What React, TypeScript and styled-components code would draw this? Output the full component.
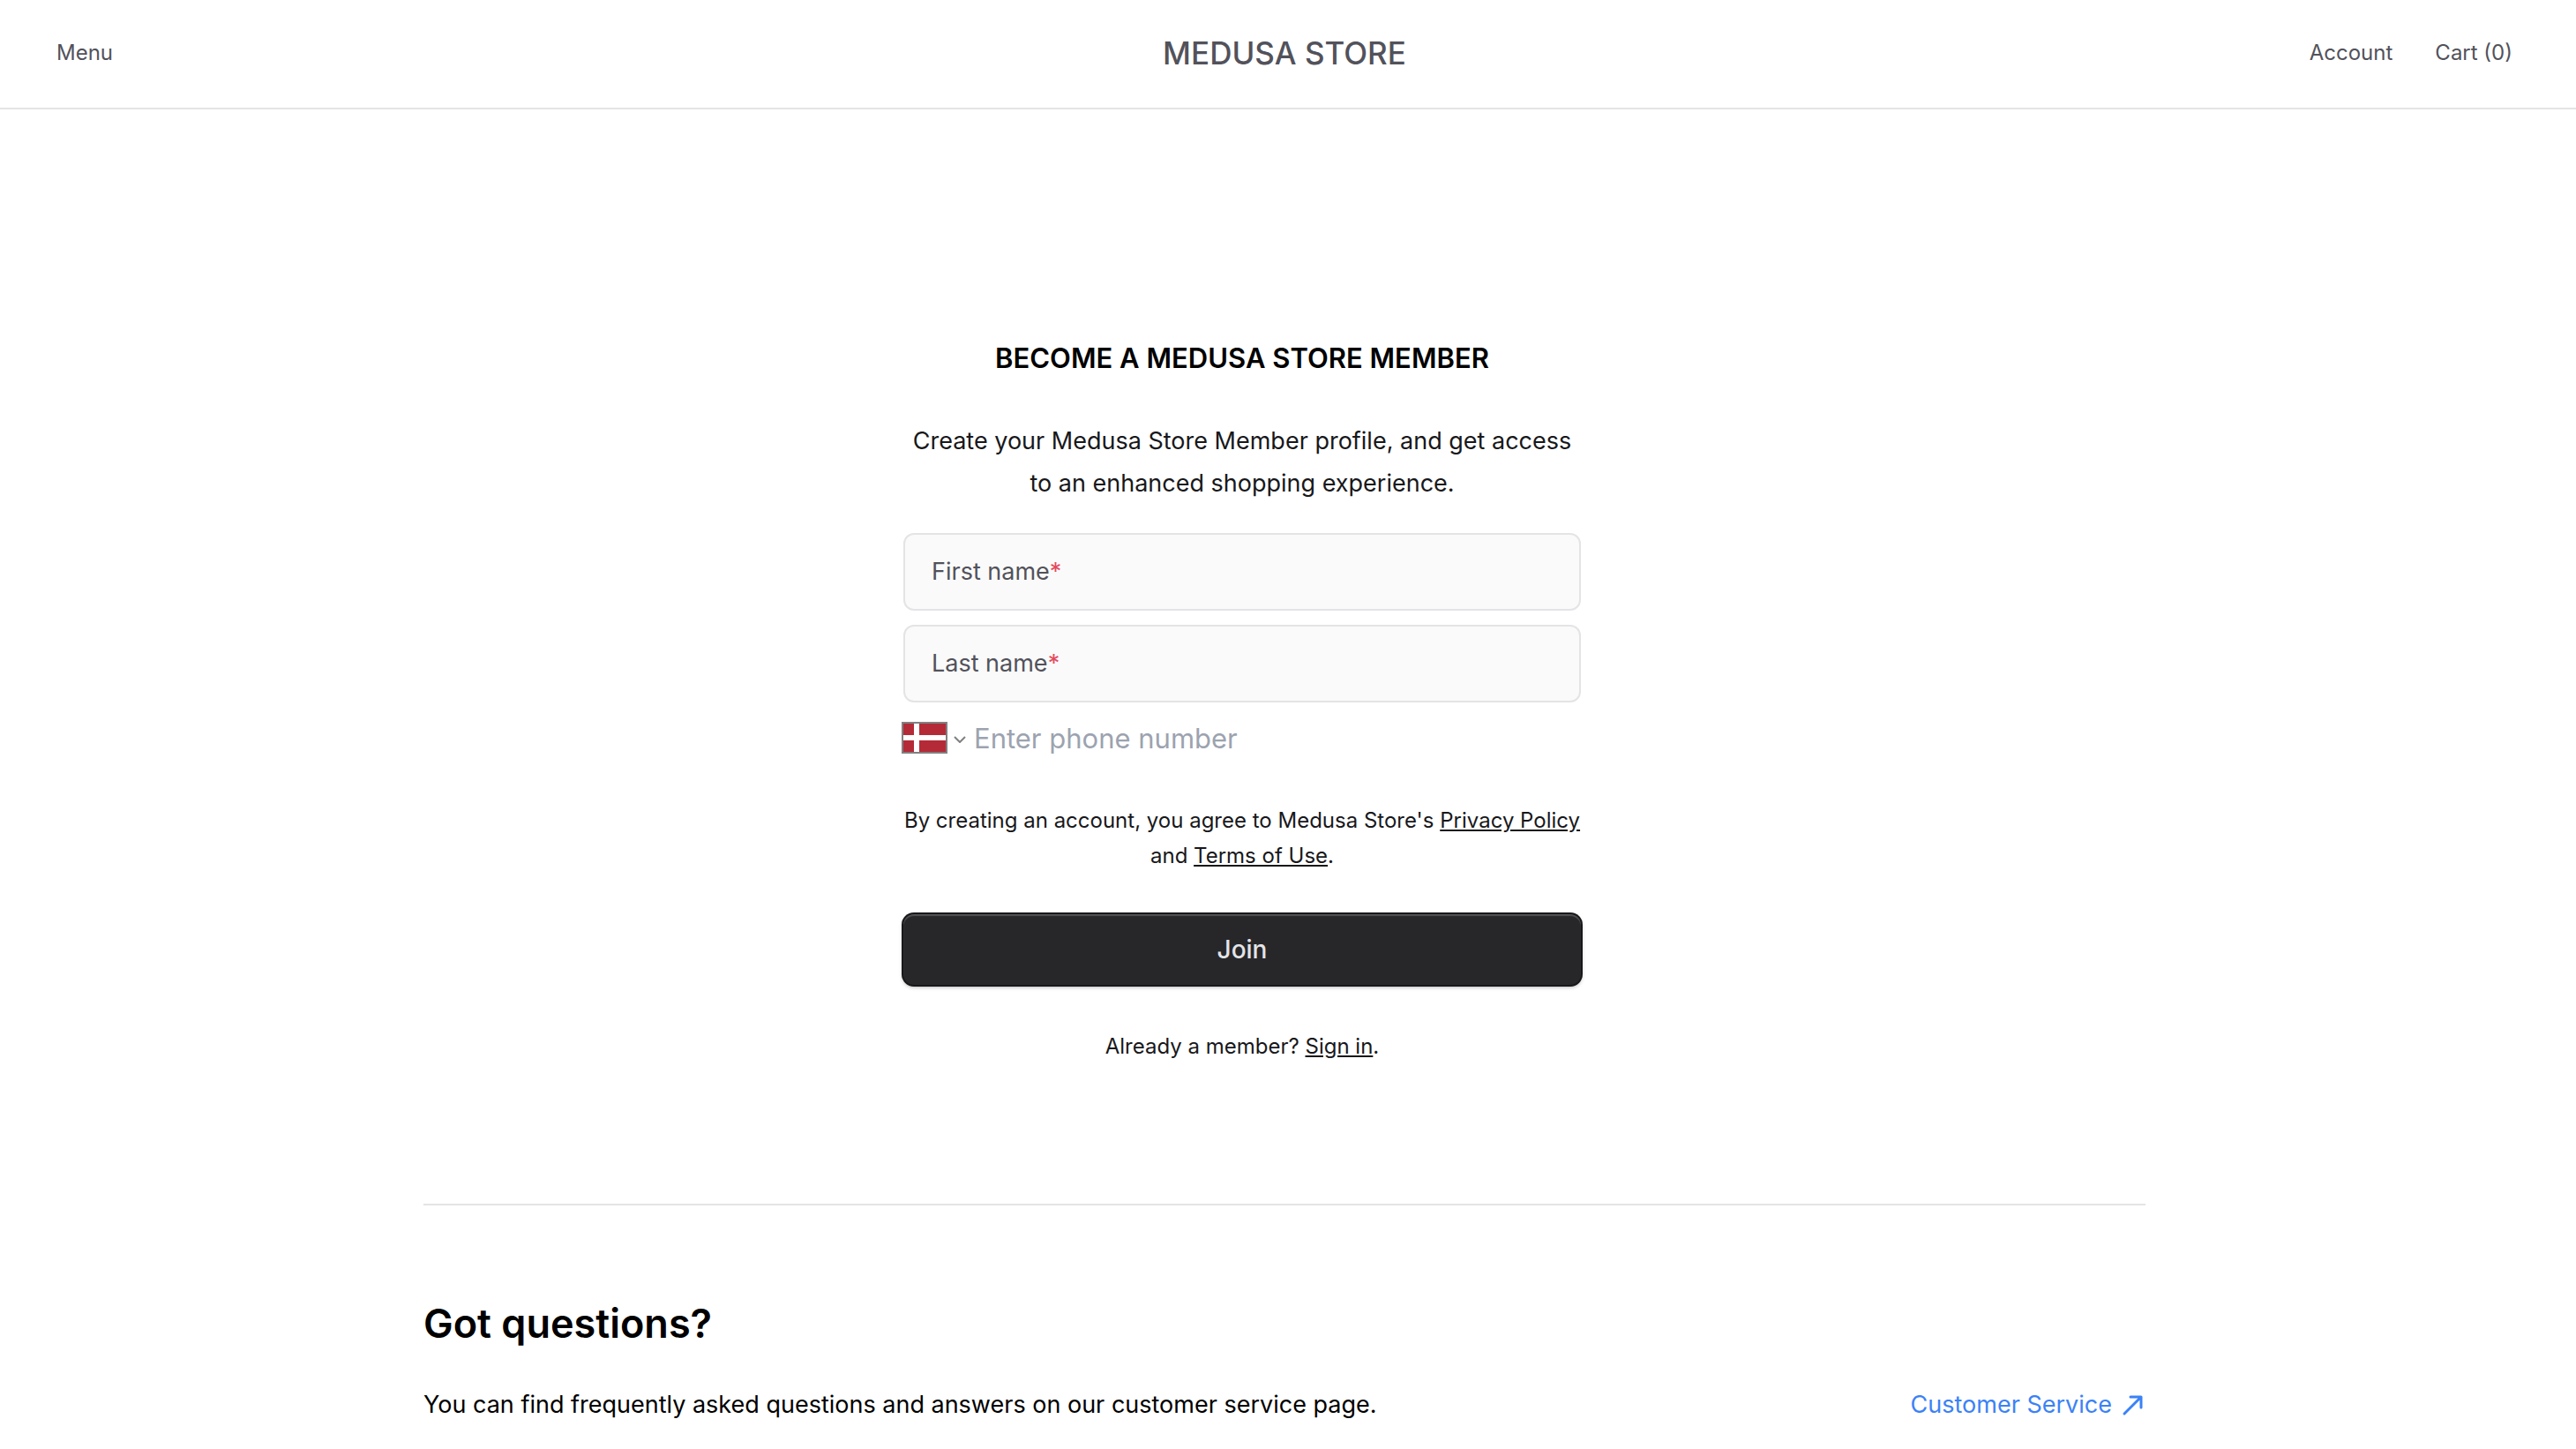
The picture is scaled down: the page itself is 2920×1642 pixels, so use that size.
import React from "react";
import styled, { createGlobalStyle } from "styled-components";

const GlobalStyle = createGlobalStyle`
  *, *::before, *::after { box-sizing: border-box; }
  body {
    margin: 0;
    background: #ffffff;
    color: #18181b;
    font-family: Inter, "Liberation Sans", sans-serif;
    font-size: 27px;
    line-height: 48px;
  }
  h1, h2, p { margin: 0; }
  button, input, select { font-family: inherit; }
`;

const Header = styled.header`
  border-bottom: 2px solid #e4e4e7;
  padding-right: 8px;
`;

const Nav = styled.nav`
  display: flex;
  align-items: center;
  height: 122px;
  max-width: 2880px;
  margin: 0 auto;
  padding: 0 48px 2px;
`;

const NavSide = styled.div<{ $end?: boolean }>`
  flex: 1 1 0;
  display: flex;
  gap: 48px;
  justify-content: ${(p) => (p.$end ? "flex-end" : "flex-start")};
`;

const navText = `
  color: #52525b;
  font-size: 24px;
  line-height: 40px;
`;

const NavButton = styled.button`
  ${navText}
  border: 0;
  padding: 0;
  background: none;
  cursor: pointer;
`;

const NavLink = styled.a`
  ${navText}
  text-decoration: none;
`;

const Brand = styled.a`
  color: #52525b;
  font-size: 35px;
  font-weight: 500;
  line-height: 56px;
  text-decoration: none;
`;

const Main = styled.main`
  padding-right: 8px;
`;

const Container = styled.div`
  max-width: 2048px;
  margin: 0 auto;
  padding: 256px 48px 0;
`;

const FormArea = styled.section`
  display: flex;
  justify-content: center;
  padding: 0 96px 158px 0;
`;

const Register = styled.form`
  display: flex;
  flex-direction: column;
  width: 100%;
  max-width: 768px;
  text-align: center;
`;

const Title = styled.h1`
  margin-bottom: 44px;
  color: #000000;
  font-size: 31px;
  font-weight: 600;
  line-height: 52px;
`;

const Intro = styled.p`
  margin-bottom: 32px;
`;

const Fields = styled.div`
  display: flex;
  flex-direction: column;
  gap: 16px;
`;

const Field = styled.div`
  position: relative;
`;

const TextInput = styled.input`
  display: block;
  width: 100%;
  height: 88px;
  padding: 0 32px;
  border: 2px solid #e4e4e7;
  border-radius: 12px;
  background: #fafafa;
  color: #18181b;
  font-size: 27px;
  outline: none;
`;

const FloatingLabel = styled.label`
  position: absolute;
  top: 20px;
  left: 32px;
  color: #52525b;
`;

const Required = styled.span`
  color: #e5485d;
`;

const Phone = styled.div`
  display: flex;
  align-items: center;
  gap: 8px;
  height: 48px;
`;

const Country = styled.label`
  position: relative;
  display: flex;
  align-items: center;
  gap: 8px;
`;

const CountrySelect = styled.select`
  position: absolute;
  inset: 0;
  width: 100%;
  opacity: 0;
  cursor: pointer;
`;

const Flag = styled.svg`
  display: block;
  width: 48px;
  height: 32px;
  box-shadow: 0 0 0 2px #808080;
`;

const Chevron = styled.svg`
  display: block;
  width: 16px;
  height: 12px;
`;

const PhoneInput = styled.input`
  flex: 1;
  min-width: 0;
  height: 48px;
  padding: 0;
  border: 0;
  outline: none;
  background: transparent;
  color: #18181b;
  font-size: 31px;

  &::placeholder {
    color: #9ca3af;
    opacity: 1;
  }
`;

const SmallPrint = styled.p`
  font-size: 24px;
  line-height: 40px;
`;

const Legal = styled(SmallPrint)`
  margin: 50px -8px 46px;
`;

const TextLink = styled.a`
  color: inherit;
  text-decoration: underline;
`;

const JoinButton = styled.button`
  height: 80px;
  margin-bottom: 50px;
  border: 0;
  border-radius: 12px;
  background: #27272a;
  box-shadow:
    inset 0 2px 1px rgba(255, 255, 255, 0.2),
    0 0 0 2px #18181b,
    0 2px 5px rgba(0, 0, 0, 0.4);
  color: #e4e4e7;
  font-size: 28px;
  font-weight: 500;
  cursor: pointer;
`;

const Help = styled.section`
  border-top: 2px solid #e4e4e7;
  padding-top: 98px;
  color: #000000;
`;

const HelpTitle = styled.h2`
  margin-bottom: 32px;
  font-size: 45px;
  font-weight: 600;
  line-height: 72px;
`;

const HelpRow = styled.div`
  display: flex;
  align-items: center;
  justify-content: space-between;
`;

const ServiceLink = styled.a`
  display: flex;
  align-items: center;
  gap: 8px;
  color: #3b82f6;
  text-decoration: none;
`;

const Arrow = styled.svg`
  display: block;
  width: 30px;
  height: 30px;
`;

const fields = [
  { id: "first_name", label: "First name", autoComplete: "given-name" },
  { id: "last_name", label: "Last name", autoComplete: "family-name" },
];

function PhoneField() {
  return (
    <Phone>
      <Country>
        <Flag viewBox="0 0 48 32" aria-hidden="true">
          <rect width="48" height="32" fill="#b52a37" />
          <path d="M12 0h6v32h-6zM0 13h48v6H0z" fill="#ffffff" />
        </Flag>
        <Chevron viewBox="0 0 16 12" fill="none" aria-hidden="true">
          <path d="M2 5l6 6 6-6" stroke="#808080" strokeWidth="2" />
        </Chevron>
        <CountrySelect aria-label="Phone number country" defaultValue="DK">
          <option value="DK">Denmark</option>
        </CountrySelect>
      </Country>
      <PhoneInput type="tel" aria-label="Phone number" placeholder="Enter phone number" />
    </Phone>
  );
}

export default function App() {
  return (
    <>
      <GlobalStyle />
      <Header>
        <Nav>
          <NavSide>
            <NavButton type="button">Menu</NavButton>
          </NavSide>
          <Brand href="#">MEDUSA STORE</Brand>
          <NavSide $end>
            <NavLink href="#account">Account</NavLink>
            <NavLink href="#cart">Cart (0)</NavLink>
          </NavSide>
        </Nav>
      </Header>
      <Main>
        <Container>
          <FormArea>
            <Register onSubmit={(e) => e.preventDefault()}>
              <Title>BECOME A MEDUSA STORE MEMBER</Title>
              <Intro>
                Create your Medusa Store Member profile, and get access to an enhanced shopping
                experience.
              </Intro>
              <Fields>
                {fields.map((f) => (
                  <Field key={f.id}>
                    <TextInput id={f.id} name={f.id} autoComplete={f.autoComplete} required />
                    <FloatingLabel htmlFor={f.id}>
                      {f.label}
                      <Required>*</Required>
                    </FloatingLabel>
                  </Field>
                ))}
                <PhoneField />
              </Fields>
              <Legal>
                By creating an account, you agree to Medusa Store's{" "}
                <TextLink href="#privacy">Privacy Policy</TextLink> and{" "}
                <TextLink href="#terms">Terms of Use</TextLink>.
              </Legal>
              <JoinButton type="submit">Join</JoinButton>
              <SmallPrint>
                Already a member? <TextLink href="#signin">Sign in</TextLink>.
              </SmallPrint>
            </Register>
          </FormArea>
          <Help>
            <HelpTitle>Got questions?</HelpTitle>
            <HelpRow>
              <p>You can find frequently asked questions and answers on our customer service page.</p>
              <ServiceLink href="#service">
                Customer Service
                <Arrow viewBox="0 0 30 30" fill="none" aria-hidden="true">
                  <path
                    d="M6 25L25 6M13 6h12v12"
                    stroke="currentColor"
                    strokeWidth="3"
                    strokeLinecap="round"
                    strokeLinejoin="round"
                  />
                </Arrow>
              </ServiceLink>
            </HelpRow>
          </Help>
        </Container>
      </Main>
    </>
  );
}
